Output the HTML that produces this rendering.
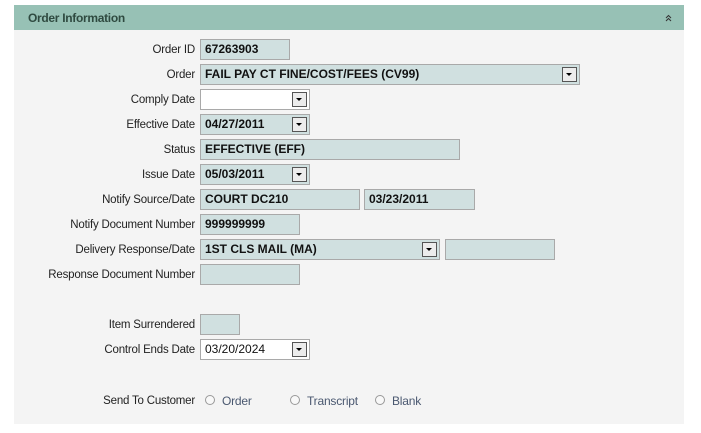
<!DOCTYPE html>
<html><head><style>
body{margin:0;width:701px;height:433px;background:#fff;font-family:"Liberation Sans",Tahoma,sans-serif;font-size:12px;color:#222;position:relative;overflow:hidden}
.panel{position:absolute;left:14px;top:5px;width:670px;height:419px;background:#f4f4f4}
.hdr{position:absolute;left:14px;top:5px;width:670px;height:25px;background:#97c1b5}
.hdr b{position:absolute;left:14px;top:6px;font-size:12px;color:#2f4a40;letter-spacing:-0.3px}
.hdr svg{position:absolute;right:12px;top:9px}
.l{position:absolute;right:506px;text-align:right;white-space:nowrap;font-size:11.5px;letter-spacing:-0.2px;color:#222}
.f{position:absolute;height:21px;border:1px solid #a9a9a9;background:#d0e0e0;box-sizing:border-box;font-weight:bold;font-size:12px;line-height:19px;padding-left:4px;color:#111;white-space:nowrap;overflow:hidden}
.w{background:#fff}
.n{font-weight:normal}
.dd{position:absolute;top:2px;right:2px;width:15px;height:15px;border:1px solid #555;background:#ececec;box-sizing:border-box}
.dd:after{content:"";position:absolute;left:3px;top:5px;border-left:3.5px solid transparent;border-right:3.5px solid transparent;border-top:3.5px solid #000}
.r{position:absolute;top:395px;width:10px;height:10px;border:1px solid #999;border-radius:50%;background:#f8f8f8;box-sizing:border-box}
.rt{position:absolute;top:394px;color:#4a5870;font-size:12px;letter-spacing:-0.2px}
</style></head><body>
<div class="panel"></div>
<div class="hdr"><b>Order Information</b><svg width="7" height="8" viewBox="0 0 7 8"><path d="M1 4L3.5 1.5L6 4M1 7L3.5 4.5L6 7" fill="none" stroke="#333" stroke-width="1"/></svg></div>
<div class="l" style="top:44px">Order ID</div><div class="f" style="left:200px;top:39px;width:90px">67263903</div>
<div class="l" style="top:69px">Order</div><div class="f" style="left:200px;top:64px;width:380px">FAIL PAY CT FINE/COST/FEES (CV99)<span class="dd"></span></div>
<div class="l" style="top:94px">Comply Date</div><div class="f w" style="left:200px;top:89px;width:110px"><span class="dd"></span></div>
<div class="l" style="top:119px">Effective Date</div><div class="f" style="left:200px;top:114px;width:110px">04/27/2011<span class="dd"></span></div>
<div class="l" style="top:144px">Status</div><div class="f" style="left:200px;top:139px;width:260px">EFFECTIVE (EFF)</div>
<div class="l" style="top:169px">Issue Date</div><div class="f" style="left:200px;top:164px;width:110px">05/03/2011<span class="dd"></span></div>
<div class="l" style="top:194px">Notify Source/Date</div><div class="f" style="left:200px;top:189px;width:160px">COURT DC210</div><div class="f" style="left:364px;top:189px;width:111px">03/23/2011</div>
<div class="l" style="top:219px">Notify Document Number</div><div class="f" style="left:200px;top:214px;width:100px">999999999</div>
<div class="l" style="top:244px">Delivery Response/Date</div><div class="f" style="left:200px;top:239px;width:240px">1ST CLS MAIL (MA)<span class="dd"></span></div><div class="f" style="left:445px;top:239px;width:110px"></div>
<div class="l" style="top:269px">Response Document Number</div><div class="f" style="left:200px;top:264px;width:100px"></div>
<div class="l" style="top:319px">Item Surrendered</div><div class="f" style="left:200px;top:314px;width:40px"></div>
<div class="l" style="top:344px">Control Ends Date</div><div class="f w n" style="left:200px;top:339px;width:110px">03/20/2024<span class="dd"></span></div>
<div class="l" style="top:395px">Send To Customer</div>
<div class="r" style="left:205px"></div><div class="rt" style="left:222px">Order</div>
<div class="r" style="left:290px"></div><div class="rt" style="left:307px">Transcript</div>
<div class="r" style="left:375px"></div><div class="rt" style="left:392px">Blank</div>
</body></html>
